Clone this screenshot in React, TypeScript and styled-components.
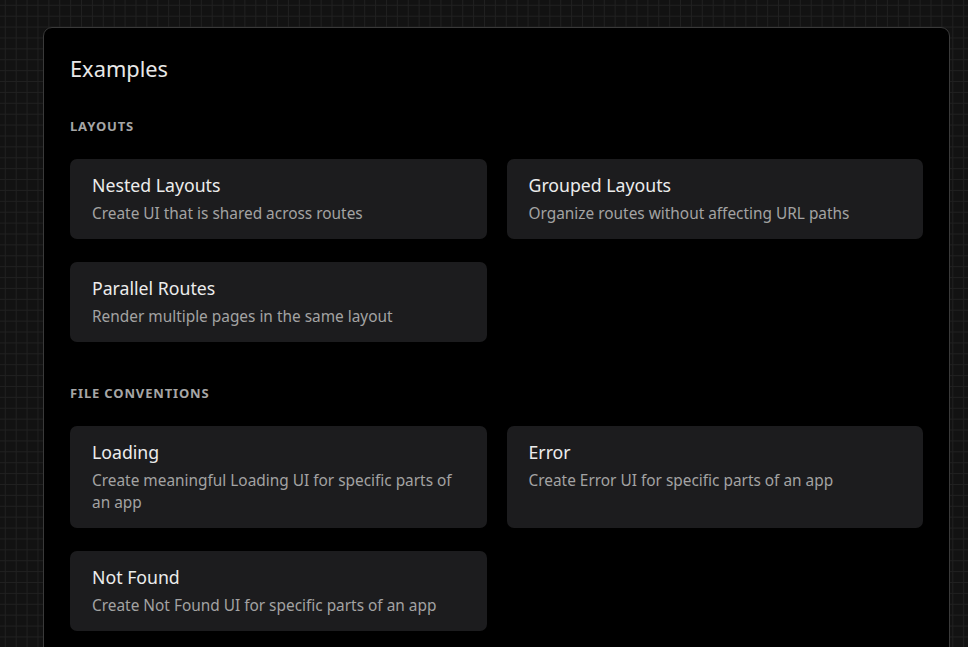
import React from "react";
import styled, { createGlobalStyle } from "styled-components";

const Global = createGlobalStyle`
  html, body {
    margin: 0;
    padding: 0;
  }
  body {
    background-color: #121212;
    background-image:
      linear-gradient(to right, #202020 1px, transparent 1px),
      linear-gradient(to bottom, #202020 1px, transparent 1px);
    background-size: 10.9px 10.9px;
    background-position: 4.8px 4.8px;
    font-family: "Noto Sans", "Open Sans", sans-serif;
    min-height: 100vh;
  }
`;

const Page = styled.div`
  padding: 27px 18px 0 43px;
  height: 647px;
  overflow: hidden;
  box-sizing: border-box;
`;

const Panel = styled.section`
  background: #000;
  border: 1px solid #3a3a3a;
  border-radius: 9px;
  padding: 25px 26px 40px;
  width: 907px;
  box-sizing: border-box;
  min-height: 700px;
`;

const Heading = styled.h1`
  margin: 0;
  font-size: 21.8px;
  font-weight: 400;
  line-height: 32px;
  color: #e8e8e8;
`;

const Section = styled.div<{ $first?: boolean }>`
  margin-top: ${(p) => (p.$first ? "33px" : "43px")};
`;

const Label = styled.h2`
  margin: 0 0 25px;
  font-size: 13px;
  font-weight: 700;
  line-height: 16px;
  letter-spacing: 0.85px;
  text-transform: uppercase;
  color: #a6a6a6;
`;

const Grid = styled.div`
  display: grid;
  grid-template-columns: 1fr 1fr;
  column-gap: 20px;
  row-gap: 23px;
`;

const Item = styled.a`
  display: block;
  background: #1c1c1e;
  border-radius: 7px;
  padding: 13px 22px 14px;
  text-decoration: none;
`;

const Title = styled.div`
  font-size: 17.7px;
  line-height: 26px;
  font-weight: 400;
  color: #ececec;
`;

const Desc = styled.div`
  margin-top: 5px;
  font-size: 15.4px;
  line-height: 22px;
  color: #a3a3a3;
`;

const sections = [
  {
    label: "Layouts",
    items: [
      { title: "Nested Layouts", desc: "Create UI that is shared across routes" },
      { title: "Grouped Layouts", desc: "Organize routes without affecting URL paths" },
      { title: "Parallel Routes", desc: "Render multiple pages in the same layout" },
    ],
  },
  {
    label: "File Conventions",
    items: [
      { title: "Loading", desc: "Create meaningful Loading UI for specific parts of an app" },
      { title: "Error", desc: "Create Error UI for specific parts of an app" },
      { title: "Not Found", desc: "Create Not Found UI for specific parts of an app" },
    ],
  },
];

export default function App() {
  return (
    <>
      <Global />
      <Page>
        <Panel>
          <Heading>Examples</Heading>
          {sections.map((s, i) => (
            <Section key={s.label} $first={i === 0}>
              <Label>{s.label}</Label>
              <Grid>
                {s.items.map((it) => (
                  <Item key={it.title} href="#">
                    <Title>{it.title}</Title>
                    <Desc>{it.desc}</Desc>
                  </Item>
                ))}
              </Grid>
            </Section>
          ))}
        </Panel>
      </Page>
    </>
  );
}
